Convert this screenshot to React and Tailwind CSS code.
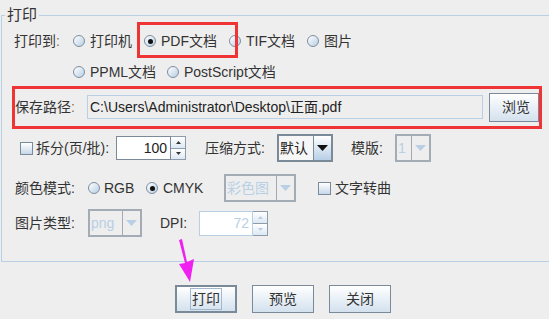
import React from 'react';

const font = { fontFamily: '"Liberation Sans", "Noto Sans CJK SC", sans-serif' };

const Radio = ({ checked }) => (
    <span className="relative flex items-center justify-center w-[12px] h-[12px] rounded-full border border-[#7d8ea0] bg-gradient-to-br from-white to-[#b8cfe5] shrink-0">
        {checked && <span className="w-[5px] h-[5px] rounded-full bg-[#111]" />}
    </span>
);

const RadioItem = ({ label, checked, w }) => (
    <div className={`flex items-center gap-[5px] ${w}`}>
        <Radio checked={checked} />
        <span>{label}</span>
    </div>
);

const Check = () => (
    <span className="w-[13px] h-[13px] border border-[#7a8a99] bg-gradient-to-b from-white to-[#c6d7e9] shrink-0" />
);

const Arrow = ({ color }) => (
    <svg width="11" height="6" viewBox="0 0 11 6">
        <path d="M0 0 L11 0 L5.5 6 Z" fill={color} />
    </svg>
);

const Combo = ({ text, tw, disabled }) => (
    <div className={`flex h-[28px] border-2 ${disabled ? 'border-[#a3acb5]' : 'border-[#7a8a99]'}`}>
        <div
            className={`${tw} flex items-center pl-[1px] border-r ${
                disabled ? 'border-[#a3acb5] text-[#b8cfe5]' : 'border-[#7a8a99] bg-[#f6f6f6] text-[#222]'
            }`}
        >
            {text}
        </div>
        <div
            className={`w-[17px] flex items-center justify-center ${
                disabled ? '' : 'bg-gradient-to-b from-white to-[#b8cfe5]'
            }`}
        >
            <Arrow color={disabled ? '#b8cfe5' : '#111'} />
        </div>
    </div>
);

const Spinner = ({ value, fw, h, disabled }) => (
    <div className={`flex ${h}`}>
        <div
            className={`${fw} flex items-center justify-end pr-[3px] border border-[#7a8a99] ${
                disabled ? 'bg-white text-[#b8cfe5] border-[#b8cfe5]' : 'bg-white text-[#222]'
            }`}
        >
            {value}
        </div>
        <div className="w-[15px] flex flex-col border border-l-0 border-[#8e9baa]">
            <div className="flex-1 flex items-center justify-center border-b border-[#8e9baa] bg-gradient-to-b from-white to-[#dde8f3]">
                <svg width="5" height="3" viewBox="0 0 5 3"><path d="M0 3 L5 3 L2.5 0 Z" fill={disabled ? '#b8cfe5' : '#333'} /></svg>
            </div>
            <div className="flex-1 flex items-center justify-center bg-gradient-to-b from-white to-[#dde8f3]">
                <svg width="5" height="3" viewBox="0 0 5 3"><path d="M0 0 L5 0 L2.5 3 Z" fill={disabled ? '#b8cfe5' : '#333'} /></svg>
            </div>
        </div>
    </div>
);

const Btn = ({ label, focused }) => (
    <button
        className={`w-[62px] h-[28px] flex items-center justify-center bg-gradient-to-b from-white to-[#d3e1ee] ${
            focused ? 'border-2 border-[#7a8a99]' : 'border border-[#7a8a99]'
        }`}
    >
        <span className={`px-[1px] leading-[20px] ${focused ? 'border border-[#a3b8cc]' : ''}`}>{label}</span>
    </button>
);

export default function App() {
    return (
        <div className="relative w-[549px] h-[319px] overflow-hidden bg-[#eeeeee] text-[14px] text-[#333]" style={font}>
            <div className="pt-[15px]">
                <div className="relative ml-[1px] w-[560px] h-[247px] border-t border-l border-b border-[#b8cfe5]">
                    <span className="absolute left-[3px] top-[-9px] px-[2px] leading-[16px] bg-[#eeeeee] text-[15px]">打印</span>

                    <div className="flex items-center h-[24px] mt-[13px]">
                        <div className="ml-[12px] w-[59px]">打印到<span className="text-[#8a6d3b]">:</span></div>
                        <RadioItem label="打印机" w="w-[71px]" />
                        <RadioItem label="PDF文档" checked w="w-[85px]" />
                        <RadioItem label="TIF文档" w="w-[78px]" />
                        <RadioItem label="图片" />
                    </div>

                    <div className="flex items-center h-[24px] mt-[7px]">
                        <div className="ml-[71px]" />
                        <RadioItem label="PPML文档" w="w-[94px]" />
                        <RadioItem label="PostScript文档" />
                    </div>

                    <div className="flex items-center h-[30px] mt-[8px]">
                        <div className="ml-[13px] w-[72px]">保存路径<span className="text-[#8a6d3b]">:</span></div>
                        <div className="w-[396px] h-[24px] flex items-center pl-[2px] border border-[#b8cfe5] text-[#222]">
                            C:\Users\Administrator\Desktop\正面.pdf
                        </div>
                        <button className="ml-[6px] w-[50px] h-[29px] flex items-center justify-center pl-[4px] border border-[#7a8a99] bg-gradient-to-b from-white to-[#d3e1ee]">
                            浏览
                        </button>
                    </div>

                    <div className="flex items-center h-[28px] mt-[12px]">
                        <div className="ml-[18px] flex items-center gap-[3px] w-[96px]">
                            <Check />
                            <span>拆分(页/批):</span>
                        </div>
                        <Spinner value="100" fw="w-[55px]" h="h-[24px]" />
                        <div className="ml-[19px] w-[72px]">压缩方式:</div>
                        <Combo text="默认" tw="w-[35px]" />
                        <div className="ml-[18px] w-[44px]">模版:</div>
                        <Combo text="1" tw="w-[15px]" disabled />
                    </div>

                    <div className="flex items-center h-[28px] mt-[12px]">
                        <div className="ml-[13px] w-[73px]">颜色模式:</div>
                        <div className="flex items-center gap-[4px] w-[58px]">
                            <Radio />
                            <span>RGB</span>
                        </div>
                        <div className="flex items-center gap-[5px] w-[78px]">
                            <Radio checked />
                            <span>CMYK</span>
                        </div>
                        <Combo text="彩色图" tw="w-[51px]" disabled />
                        <div className="ml-[22px] flex items-center gap-[4px]">
                            <Check />
                            <span>文字转曲</span>
                        </div>
                    </div>

                    <div className="flex items-center h-[30px] mt-[6px]">
                        <div className="ml-[13px] w-[73px]">图片类型:</div>
                        <Combo text="png" tw="w-[33px]" disabled />
                        <div className="ml-[18px] w-[39px]">DPI:</div>
                        <Spinner value="72" fw="w-[54px]" h="h-[25px]" disabled />
                    </div>
                </div>
            </div>

            <div className="flex gap-[15px] pl-[175px] mt-[23px]">
                <Btn label="打印" focused />
                <Btn label="预览" />
                <Btn label="关闭" />
            </div>

            <div className="absolute left-[137px] top-[22px] w-[101px] h-[36px] border-[3px] border-[#ee3434]" />
            <div className="absolute left-[12px] top-[86px] w-[530px] h-[43px] border-[3px] border-[#ee3434]" />

            <svg className="absolute left-[176px] top-[238px]" width="22" height="48" viewBox="0 0 22 48">
                <path d="M3 2 L6 1 L11 24 L18 21 L14 44 L3 26 L9 25 Z" fill="#f020f0" />
            </svg>
        </div>
    );
}
